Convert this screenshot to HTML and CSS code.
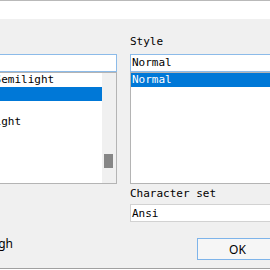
FILE: index.html
```html
<!DOCTYPE html>
<html>
<head>
    <title>Font</title>
    <link rel="stylesheet" href="styles.css">
</head>
<body>
    <div class="topbar"></div>
    <div class="dialog">
        <div class="panes">
            <!-- Font name column -->
            <div class="col col-font">
                <div class="label">Font</div>
                <div class="edit">Consolas</div>
                <div class="list">
                    <ul class="items">
                        <li>Segoe UI Semilight</li>
                        <li class="selected">Consolas</li>
                        <li>Courier</li>
                        <li>Calibri Light</li>
                        <li>Arial</li>
                        <li>Cambria</li>
                        <li>Candara</li>
                        <li>Corbel</li>
                    </ul>
                    <div class="scrollbar"><div class="thumb"></div></div>
                </div>
                <div class="effects">
                    <span class="check"></span>
                    <span class="effect-name">Strikethrough</span>
                </div>
            </div>

            <!-- Style column -->
            <div class="col col-style">
                <div class="label">Style</div>
                <div class="edit">Normal</div>
                <div class="list">
                    <ul class="items">
                        <li class="selected">Normal</li>
                    </ul>
                </div>
                <div class="label label-charset">Character set</div>
                <div class="combo">Ansi</div>
                <button class="ok">OK</button>
            </div>
        </div>
    </div>
</body>
</html>
```

FILE: styles.css
```css
html, body { margin: 0; overflow: hidden; background: #fff; }
body { width: 270px; height: 270px; font: 11px/14px "DejaVu Sans Mono", monospace; color: #000; }

.topbar { height: 18px; border-top: 1px solid #b9b9b9; background: #fff; }
.dialog { height: 249px; border-bottom: 1px solid #a0a0a0; background: #f0f0f0; overflow: hidden; }

.panes { display: flex; gap: 13px; margin-left: -67px; padding-top: 16px; }
.col { display: flex; flex-direction: column; flex: none; }
.col-font { width: 184px; }
.col-style { width: 148px; }

.label { height: 14px; margin-bottom: 5px; white-space: nowrap; }
.label-charset { margin: 3px 0; }

.edit {
    height: 14px;
    padding: 1px 0 1px 1px;
    border: 1px solid #8cbbe9;
    background: #fff;
    white-space: nowrap;
    overflow: hidden;
}

.list { display: flex; height: 110px; border: 1px solid #b4b4b4; background: #fff; }
.items { flex: 1; list-style: none; margin: 0; padding: 0; overflow: hidden; }
.items li { height: 14px; padding-left: 1px; white-space: nowrap; }
.items .selected { background: #0078d7; color: #fff; }
.scrollbar { flex: none; width: 14px; background: #f0f0f0; }
.thumb { width: 9px; height: 14px; margin: 81px 0 0 2px; background: #868686; }

.combo {
    height: 14px;
    padding: 2px 0 0 1px;
    border: 1px solid #d2d2d2;
    background: #fff;
    white-space: nowrap;
}

.effects {
    display: flex;
    justify-content: flex-end;
    align-items: center;
    gap: 4px;
    width: 80px;
    margin-top: 52px;
    font: 12px/16px "Noto Sans", sans-serif;
    white-space: nowrap;
}
.check { flex: none; width: 11px; height: 11px; border: 1px solid #333; background: #fff; }
.effect-name { flex: none; }

.ok {
    align-self: flex-end;
    box-sizing: border-box;
    width: 81px;
    height: 22px;
    margin-top: 16px;
    padding: 0;
    border: 1px solid #7eb4ea;
    background: #f6f6f6;
    font: 12px "Noto Sans", sans-serif;
    color: #000;
}
```
